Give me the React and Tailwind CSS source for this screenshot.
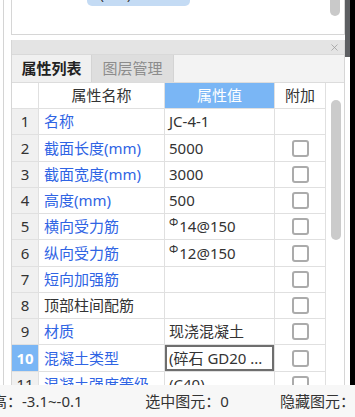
import { X } from 'lucide-react';

const rows = [
  { n: 1, name: '名称', value: 'JC-4-1', h: 'h-[26px]', check: false },
  { n: 2, name: '截面长度(mm)', value: '5000', h: 'h-[27px]' },
  { n: 3, name: '截面宽度(mm)', value: '3000', h: 'h-[26px]' },
  { n: 4, name: '高度(mm)', value: '500', h: 'h-[26px]' },
  { n: 5, name: '横向受力筋', value: '14@150', bar: true, h: 'h-[26px]' },
  { n: 6, name: '纵向受力筋', value: '12@150', bar: true, h: 'h-[27px]' },
  { n: 7, name: '短向加强筋', value: '', h: 'h-[26px]' },
  { n: 8, name: '顶部柱间配筋', value: '', dark: true, h: 'h-[26px]' },
  { n: 9, name: '材质', value: '现浇混凝土', h: 'h-[26px]' },
  { n: 10, name: '混凝土类型', value: '(碎石 GD20 ...', editing: true, h: 'h-[27px]' },
  { n: 11, name: '混凝土强度等级', value: '(C40)', h: 'h-[26px]' },
];

function Checkbox() {
  return <div className="w-[17px] h-[17px] rounded-[3px] border-2 border-[#ababab] bg-white" />;
}

export default function App() {
  return (
    <div className="w-[355px] h-[417px] overflow-hidden bg-white text-[15px] text-[#333] font-['Noto_Sans','Noto_Sans_CJK_SC',sans-serif] flex flex-col">
      <div className="h-[385px] shrink-0 flex overflow-hidden">
        {/* left gutter */}
        <div className="w-[11px] flex">
          <div className="w-[3px]" />
          <div className="w-px bg-[#d4d4d4]" />
        </div>

        <div className="w-[334px] flex flex-col">
          {/* upper panel */}
          <div className="h-[35px] shrink-0 border-x border-b border-[#d6d6d6] flex">
            <div className="w-[75px]" />
            <div className="w-[103px] h-[6px] rounded-b-[5px] bg-[#c4dbf4] overflow-hidden flex justify-start pl-[13px]">
              <span className="text-[13px] leading-[13px] -mt-[11px] text-[#333]">(C40)</span>
            </div>
            <div className="flex-1" />
            <div className="w-[10px] h-[16px] rounded-b-full bg-[#c9c9c9] mr-[4px]" />
          </div>
          <div className="h-[5px] shrink-0" />

          {/* lower panel */}
          <div className="flex-1 border-l border-r border-[#d6d6d6] flex flex-col overflow-hidden">
            <div className="h-[15px] shrink-0 bg-[#e4e4e4] flex items-center justify-end pr-[4px] border-b border-[#d9d9d9]">
              <X size={11} strokeWidth={1.6} className="text-[#9a9a9a]" />
            </div>
            <div className="h-[28px] shrink-0 flex bg-[#f3f3f3] border-b border-[#dcdcdc]">
              <div className="w-[80px] bg-[#f0f0f0] border-r border-[#d4d4d4] flex items-center justify-center font-bold text-[#222]">属性列表</div>
              <div className="w-[82px] bg-[#dedede] border-r border-[#d4d4d4] flex items-center justify-center text-[#8c8c8c]">图层管理</div>
              <div className="flex-1" />
            </div>

            <div className="flex shrink-0">
              <div className="w-[314px] flex flex-col">
                {/* header */}
                <div className="grid grid-cols-[27px_126px_110px_51px] h-[26px] shrink-0">
                  <div className="border-r border-b border-[#e0e0e0] bg-white" />
                  <div className="border-r border-b border-[#e0e0e0] flex items-center justify-center text-[#333]">属性名称</div>
                  <div className="border-r border-b border-[#e0e0e0] bg-[#7ab6f5] flex items-center justify-center text-white">属性值</div>
                  <div className="border-r border-b border-[#e0e0e0] flex items-center justify-center text-[#333]">附加</div>
                </div>
                {rows.map(r => (
                  <div key={r.n} className={`grid grid-cols-[27px_126px_110px_51px] shrink-0 ${r.h}`}>
                    <div className={`border-r border-b border-[#e0e0e0] flex items-center justify-center ${r.editing ? 'bg-[#7ab6f5] text-white font-bold' : 'bg-[#f0f0f0] text-[#333]'}`}>{r.n}</div>
                    <div className={`border-r border-b border-[#e0e0e0] flex items-center pl-[5px] whitespace-nowrap ${r.dark ? 'text-[#333]' : 'text-[#2f64e4]'}`}>{r.name}</div>
                    <div className="border-r border-b border-[#e0e0e0] flex items-stretch whitespace-nowrap overflow-hidden">
                      {r.editing ? (
                        <div className="flex-1 border-2 border-[#6e6e6e] flex items-center pl-[2px]">{r.value}</div>
                      ) : (
                        <div className="flex-1 flex items-center pl-[4px]">
                          {r.bar && <span className="text-[11px] relative -top-[4px] mr-[1px]">Φ</span>}
                          {r.value}
                        </div>
                      )}
                    </div>
                    <div className="border-r border-b border-[#e0e0e0] flex items-center justify-center">
                      {r.check !== false && <Checkbox />}
                    </div>
                  </div>
                ))}
              </div>
              {/* table scrollbar */}
              <div className="w-[18px] pt-[17px] pl-[5px]">
                <div className="w-[10px] h-[140px] rounded-full bg-[#cbcbcb]" />
              </div>
            </div>
          </div>
        </div>

        {/* right edge */}
        <div className="w-[10px] flex">
          <div className="w-[5px] flex flex-col">
            <div className="h-[57px] bg-[#5d5f62]" />
            <div className="flex-1 bg-white" />
          </div>
          <div className="w-[5px] bg-black" />
        </div>
      </div>

      {/* status bar */}
      <div className="flex-1 bg-[#f7f7f7] flex items-center text-[15px] text-[#333] whitespace-nowrap">
        <span className="-ml-[8px] w-[157px]">高：-3.1~-0.1</span>
        <span className="w-[138px]">选中图元：0</span>
        <span>隐藏图元：</span>
      </div>
    </div>
  );
}
